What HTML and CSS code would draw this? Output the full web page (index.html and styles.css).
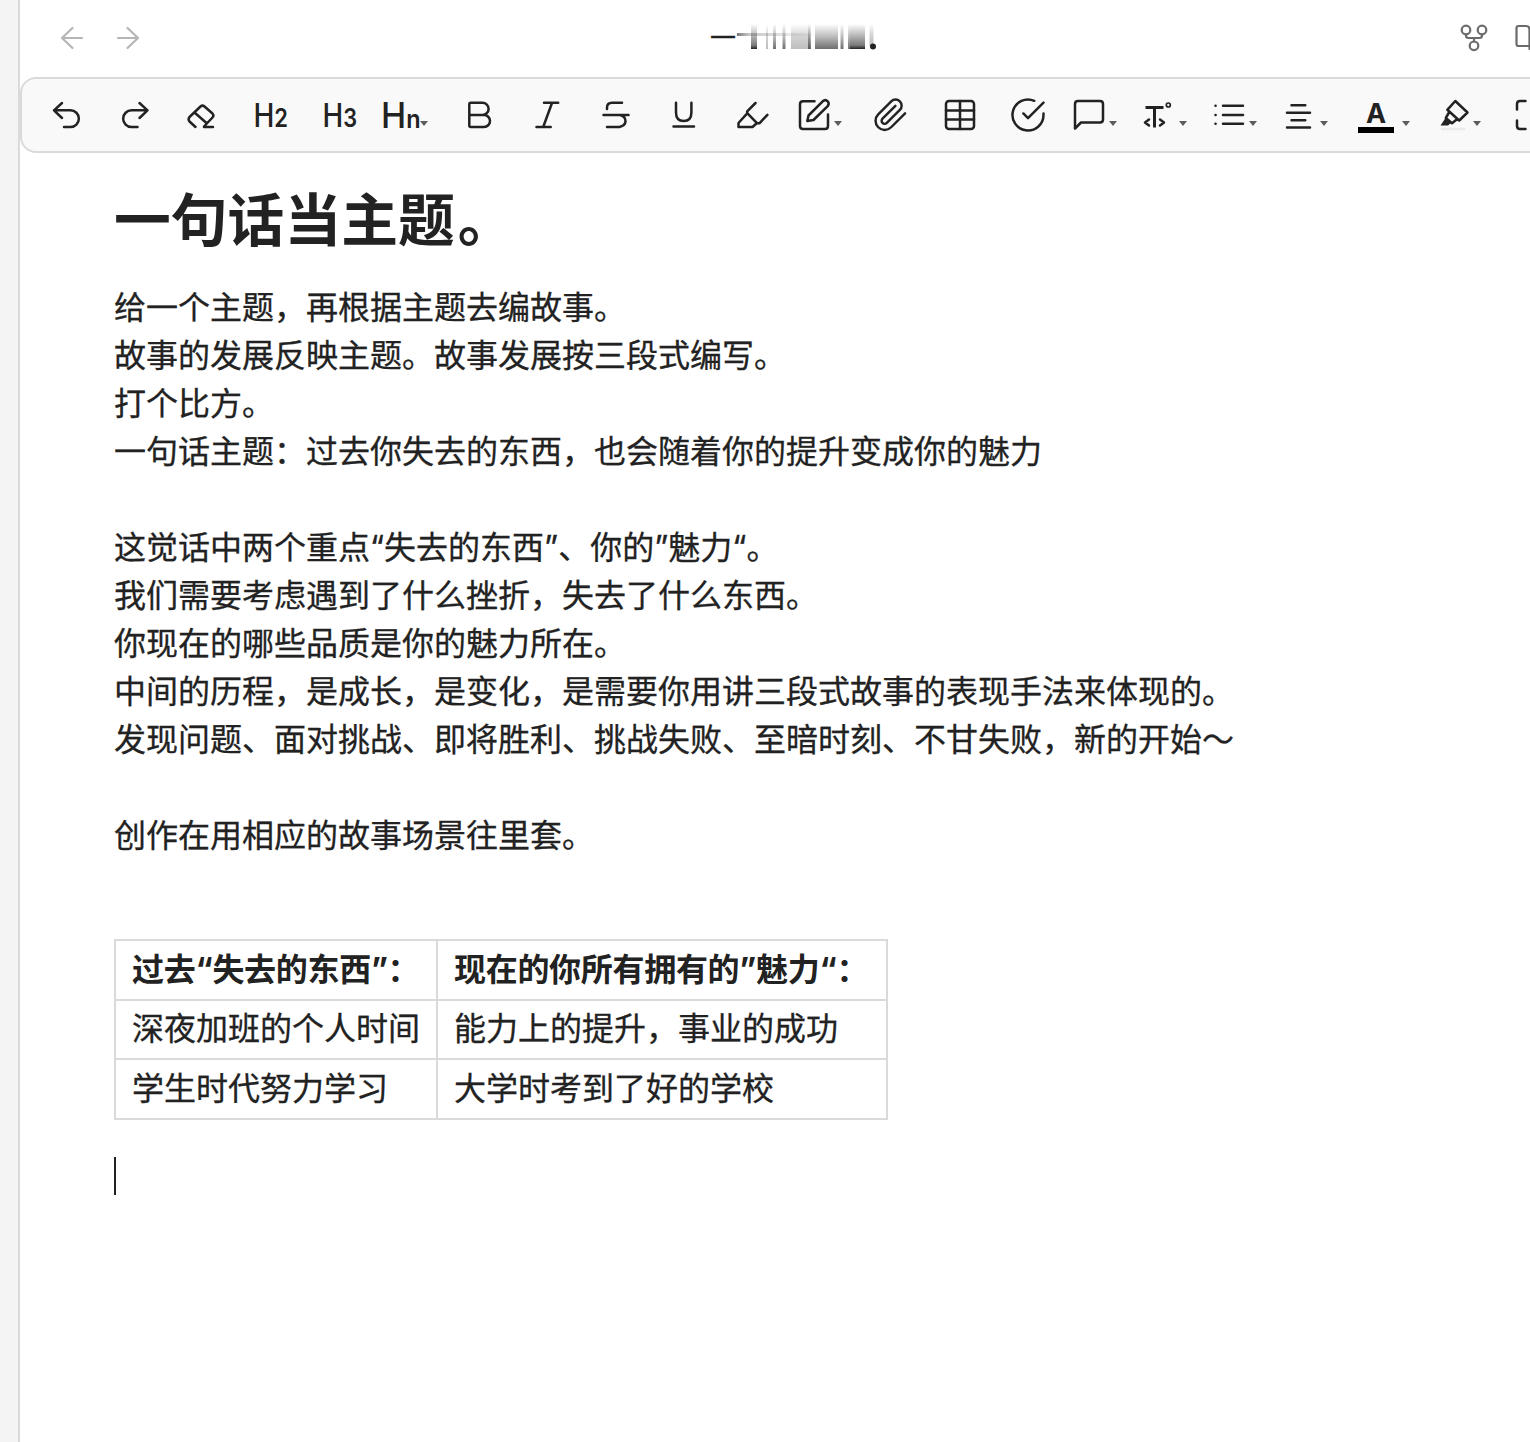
FILE: index.html
```html
<!DOCTYPE html>
<html lang="zh-CN">
<head>
    <meta charset="UTF-8">
    <meta name="viewport" content="width=device-width, initial-scale=1.0">
    <title>一句话当主题。</title>
    <link rel="stylesheet" href="styles.css">
</head>
<body>
    <div class="sidebar"></div>

    <div class="main">
        <header class="view-header">
            <div class="nav">
                <svg class="nav-icon" viewBox="0 0 40 40"><path d="M30 20H10M20.5 10 10 20l10.5 10"/></svg>
                <svg class="nav-icon" viewBox="0 0 40 40"><path d="M10 20h20M19.500 10 30 20 19.500 30"/></svg>
            </div>
            <div class="title">
                <span class="title-text">一</span>
                <svg class="title-smear" viewBox="0 0 142 30">
                    <defs>
                        <linearGradient id="dark" x1="0" y1="0" x2="0" y2="1">
                            <stop offset="0" stop-color="#222" stop-opacity="0"/>
                            <stop offset="0.85" stop-color="#222" stop-opacity="0.6"/>
                            <stop offset="1" stop-color="#222"/>
                        </linearGradient>
                        <linearGradient id="mid" x1="0" y1="0" x2="0" y2="1">
                            <stop offset="0" stop-color="#222" stop-opacity="0"/>
                            <stop offset="0.5" stop-color="#222" stop-opacity="0.3"/>
                            <stop offset="1" stop-color="#222" stop-opacity="0.65"/>
                        </linearGradient>
                        <linearGradient id="light" x1="0" y1="0" x2="0" y2="1">
                            <stop offset="0" stop-color="#222" stop-opacity="0"/>
                            <stop offset="0.5" stop-color="#222" stop-opacity="0.2"/>
                            <stop offset="1" stop-color="#222" stop-opacity="0.3"/>
                        </linearGradient>
                        <linearGradient id="fade">
                            <stop offset="0" stop-color="#222" stop-opacity="0.6"/>
                            <stop offset="0.15" stop-color="#222" stop-opacity="0.25"/>
                            <stop offset="1" stop-color="#222" stop-opacity="0"/>
                        </linearGradient>
                    </defs>
                    <rect x="1" y="11" width="80" height="3" fill="url(#fade)"/>
                    <rect x="15" y="2" width="6" height="25" fill="url(#dark)"/>
                    <rect x="30" y="2" width="2" height="25" fill="url(#light)"/>
                    <rect x="37" y="2" width="3" height="25" fill="url(#mid)"/>
                    <rect x="46.5" y="2" width="3" height="25" fill="url(#mid)"/>
                    <rect x="55" y="2" width="19" height="25" fill="url(#light)"/>
                    <rect x="72" y="2" width="3" height="25" fill="url(#mid)"/>
                    <rect x="79" y="2" width="23" height="25" fill="url(#mid)"/>
                    <rect x="104.5" y="2" width="3" height="25" fill="url(#mid)"/>
                    <rect x="112" y="2" width="2" height="25" fill="url(#mid)"/>
                    <rect x="114" y="2" width="15" height="25" fill="url(#dark)"/>
                    <rect x="133.5" y="2" width="4" height="22" fill="url(#light)"/>
                    <circle cx="137" cy="24.5" r="3" fill="#222"/>
                </svg>
            </div>
            <div class="actions">
                <svg class="action-icon" viewBox="0 0 40 40"><circle cx="12" cy="12" r="4.3"/><circle cx="28" cy="12" r="4.3"/><circle cx="20" cy="27.8" r="4.3"/><path d="M12 16.500v1q0 2.500 2.500 2.500h11q2.500 0 2.500-2.500v-1M20 20v3.500"/></svg>
                <svg class="action-icon" viewBox="0 0 40 40"><path d="M22 28H10.500q-2 0-2-2V10q0-2 2-2H18q3.500 0 3.500 3.500V31"/></svg>
            </div>
        </header>

        <div class="toolbar">
            <button class="tool"><svg viewBox="0 0 40 40"><path d="M16 8 8 15.300l8 7.700M8 15.300h16.500a8.300 8.300 0 0 1 0 16.700H18"/></svg></button>
            <button class="tool"><svg viewBox="0 0 40 40"><path d="m24.500 8 8 7.300-8 7.700M32.500 15.300H16.500a8.300 8.300 0 0 0 0 16.700h6"/></svg></button>
            <button class="tool"><svg viewBox="0 0 40 40"><path d="M12.500 32 6.500 26.500q-1.800-2.200 0-4.500L17.500 11.500q2-1.800 4 0l8 7q1.800 2 0 4L21 31.500M11.500 17.500l12 10.500M21 32h9"/></svg></button>
            <button class="tool"><svg viewBox="0 0 40 40"><text class="h-big" x="2.5" y="31.5" textLength="34.5" lengthAdjust="spacingAndGlyphs">H<tspan class="h-small">2</tspan></text></svg></button>
            <button class="tool"><svg viewBox="0 0 40 40"><text class="h-big" x="2.5" y="31.5" textLength="34.5" lengthAdjust="spacingAndGlyphs">H<tspan class="h-small">3</tspan></text></svg></button>
            <button class="tool tool-menu tool-heading"><svg viewBox="0 0 40 40"><text class="h-wide" x="-1" y="33" textLength="39.5" lengthAdjust="spacingAndGlyphs">H<tspan class="h-small">n</tspan></text></svg><i class="caret"></i></button>
            <button class="tool"><svg viewBox="0 0 40 40"><path d="M11.500 7.800h12a6.100 6.100 0 0 1 0 12.200H10.500M25 20a6 6 0 0 1 0 12H11.800q-1.500 0-1.500-1.500V9q0-1.200 1.200-1.200"/></svg></button>
            <button class="tool"><svg viewBox="0 0 40 40"><path d="M16 7.800h14.200M8.500 32h14.200M24 8l-8.800 24"/></svg></button>
            <button class="tool"><svg viewBox="0 0 40 40"><path d="M26 7.800H16q-5 0-5 5v1.200M7.500 20h25M24 20q5.500 1.500 5.500 6t-6 6H11"/></svg></button>
            <button class="tool"><svg viewBox="0 0 40 40"><path d="M12 7.800v9.700q0 8.500 7.700 8.500t7.700-8.500V7.800M9.500 31.600H30"/></svg></button>
            <button class="tool"><svg viewBox="0 0 40 40"><path d="m22.500 8-8.300 8.300v2L5.500 28v4h14l4.500-4M14.500 18.300l9.700 10h2.200l8-8.500"/></svg></button>
            <button class="tool tool-menu"><svg viewBox="0 0 40 40"><path d="M20.500 6.300H9q-3 0-3 3V31q0 3 3 3h22q3 0 3-3V19.500"/><path d="m13.300 26 1.200-5.500L28.700 6.300q2.700-2.300 5 0 2 2.300 0 4.800L19.500 25z"/></svg><i class="caret"></i></button>
            <button class="tool"><svg viewBox="0 0 40 40"><path transform="translate(1.5 1.5) scale(1.52)" class="scaled" d="m21.440 11.050-9.190 9.190a6 6 0 0 1-8.490-8.490l8.570-8.570A4 4 0 1 1 18 8.840l-8.590 8.570a2 2 0 0 1-2.830-2.830l8.490-8.480"/></svg></button>
            <button class="tool"><svg viewBox="0 0 40 40"><rect x="7" y="6" width="28" height="28" rx="3"/><path d="M21 6v28M7 15.500h28M7 24.500h28"/></svg></button>
            <button class="tool"><svg viewBox="0 0 40 40"><path transform="translate(1.4 1.4) scale(1.55)" class="scaled" d="M22 11.080V12a10 10 0 1 1-5.930-9.140M22 4 12 14.010l-3-3"/></svg></button>
            <button class="tool tool-menu"><svg viewBox="0 0 40 40"><path d="M6 33.500V9q0-3 3-3h22q3 0 3 3v15.500q0 3-3 3H12z"/></svg><i class="caret"></i></button>
            <button class="tool tool-menu tool-template"><svg viewBox="0 0 40 40"><path class="thick" d="M8.500 12.500h18M17.500 12.500v20"/><circle cx="31.3" cy="10" r="2" class="thin"/><path d="m12 24.500-4 3 4 3M23 24.500l4 3-4 3"/></svg><i class="caret"></i></button>
            <button class="tool tool-menu"><svg viewBox="0 0 40 40"><path d="M6.500 10.800h.1M6.500 20h.1M6.500 28.800h.1M14 10.800h20M14 20h20M14 28.800h20"/></svg><i class="caret"></i></button>
            <button class="tool tool-menu tool-align"><svg viewBox="0 0 40 40"><path d="M13.500 10.300h13.800M9 17.800h23M13.500 25.300h13.800M9 32.600h23"/></svg><i class="caret"></i></button>
            <button class="tool tool-menu tool-color"><svg viewBox="0 0 40 40"><text class="a-text" x="20" y="28">A</text><rect class="swatch" x="2" y="32" width="36" height="6"/></svg><i class="caret"></i></button>
            <button class="tool tool-menu tool-marker"><svg viewBox="0 0 40 40"><path class="marker-line" d="M7 34h22"/><path d="M20.300 6 32.500 17.500 24.200 25.500 12.300 14.800zM14 17.500l-3.200 5.500 6.200 5.300 5-4"/><path class="solid" d="M10.500 23 5.500 30.500h7.500l3.500-3z"/></svg><i class="caret"></i></button>
            <button class="tool"><svg viewBox="0 0 40 40"><path d="M7 14.500V9q0-3 3-3h5.500M7 25.500V31q0 3 3 3h5.500M25 6h6q3 0 3 3v6M25 34h6q3 0 3-3v-6"/></svg></button>
        </div>

        <article class="note">
            <h1>一句话当主题<span class="stop">。</span></h1>
            <p>给一个主题，再根据主题去编故事。<br>
            故事的发展反映主题。故事发展按三段式编写。<br>
            打个比方。<br>
            一句话主题：过去你失去的东西，也会随着你的提升变成你的魅力</p>
            <p>这觉话中两个重点“失去的东西”、你的”魅力“。<br>
            我们需要考虑遇到了什么挫折，失去了什么东西。<br>
            你现在的哪些品质是你的魅力所在。<br>
            中间的历程，是成长，是变化，是需要你用讲三段式故事的表现手法来体现的。<br>
            发现问题、面对挑战、即将胜利、挑战失败、至暗时刻、不甘失败，新的开始～</p>
            <p>创作在用相应的故事场景往里套。</p>
            <table>
                <thead>
                    <tr><th>过去“失去的东西”：</th><th>现在的你所有拥有的”魅力“：</th></tr>
                </thead>
                <tbody>
                    <tr><td>深夜加班的个人时间</td><td>能力上的提升，事业的成功</td></tr>
                    <tr><td>学生时代努力学习</td><td>大学时考到了好的学校</td></tr>
                </tbody>
            </table>
            <div class="cursor"></div>
        </article>
    </div>
</body>
</html>
```
FILE: styles.css
```css
* {
    box-sizing: border-box;
}
body {
    margin: 0;
    height: 1442px;
    display: flex;
    overflow: hidden;
    background: #fff;
    color: #222;
    font-family: Inter, 'Noto Sans CJK SC', sans-serif;
}
.sidebar {
    flex: none;
    width: 20px;
    background: #f4f4f4;
    border-right: 2px solid #dadada;
}
.main {
    flex: 1;
    min-width: 0;
    overflow: hidden;
}
svg {
    display: block;
    flex: none;
    width: 40px;
    height: 40px;
    fill: none;
    stroke: #222;
    stroke-width: 2.5;
    stroke-linecap: round;
    stroke-linejoin: round;
}

/* header */
.view-header {
    height: 77px;
    display: flex;
    justify-content: space-between;
    padding: 18px 0 0 32px;
}
.nav {
    display: flex;
    gap: 16px;
}
.nav-icon {
    stroke: #b5b5b5;
    stroke-width: 2.2;
}
.title {
    display: flex;
    margin-right: 14px;
}
.title-text {
    width: 26px;
    font-size: 26px;
    line-height: 39px;
    -webkit-text-stroke: 0.3px #222;
}
.title-smear {
    width: 142px;
    height: 30px;
    margin-top: 4px;
    stroke: none;
}
.actions {
    display: flex;
    gap: 14px;
    width: 76px;
}
.action-icon {
    stroke: #6b6b6b;
    stroke-width: 2.2;
}

/* toolbar */
.toolbar {
    display: flex;
    width: 1560px;
    height: 76px;
    padding-left: 10px;
    background: #f9f9f9;
    border: 2px solid #dadada;
    border-radius: 16px;
}
.tool {
    flex: none;
    display: flex;
    align-items: center;
    justify-content: center;
    width: 68.4px;
    height: 72px;
    margin: 0;
    padding: 0;
    border: 0;
    background: none;
}
.tool-menu {
    justify-content: flex-start;
    width: 70px;
    padding-left: 7px;
}
.tool-heading {
    width: 71px;
    padding-left: 8px;
}
.tool-heading .caret {
    margin-left: -2px;
}
.tool-template {
    padding-left: 5px;
}
.tool-template .caret {
    margin-left: 2px;
}
.tool-align {
    width: 72px;
    padding-left: 6px;
}
.tool-align .caret {
    margin-left: 2px;
}
.tool-color {
    width: 80px;
    padding-left: 12px;
}
.tool-color .caret {
    margin-left: 6px;
}
.tool-marker {
    width: 72px;
    padding-left: 11px;
}
.tool-marker .caret {
    margin-left: -2px;
}
.caret {
    margin-top: 17px;
    border: 4.5px solid transparent;
    border-top: 5px solid #5c5c5c;
    border-bottom: 0;
}
.toolbar text {
    fill: #222;
    stroke: none;
    font-family: Inter, sans-serif;
}
.toolbar .h-big {
    font-size: 32px;
    font-weight: 500;
}
.toolbar .h-small {
    font-size: 25px;
    font-weight: 600;
}
.toolbar .h-wide {
    font-size: 36px;
    font-weight: 500;
}
.toolbar .a-text {
    font-size: 27px;
    font-weight: 700;
    text-anchor: middle;
}
.scaled {
    stroke-width: 1.6;
}
.thick {
    stroke-width: 3;
    stroke-linecap: butt;
}
.thin {
    stroke-width: 1.7;
}
.swatch {
    fill: #000;
    stroke: none;
}
.solid {
    fill: #222;
    stroke: none;
}
.marker-line {
    stroke: #ebebeb;
}

/* note content */
.note {
    padding: 28px 0 0 94px;
    font-size: 32px;
    line-height: 48px;
    -webkit-text-stroke: 0.3px #222;
}
.note h1 {
    margin: 0 0 23px;
    font-size: 56.8px;
    line-height: 80px;
    font-weight: 700;
    -webkit-text-stroke: 0;
}
.stop {
    margin-left: 3px;
}
.note p {
    margin: 0 0 48px;
    white-space: nowrap;
}
.note table {
    margin-top: 79px;
    border-collapse: collapse;
    table-layout: fixed;
    width: 774px;
}
.note th,
.note td {
    height: 59.6px;
    padding: 0 16px;
    border: 2px solid #dadada;
    text-align: left;
    white-space: nowrap;
}
.note th:first-child {
    width: 322px;
}
.note th {
    font-weight: 700;
    letter-spacing: -0.3px;
    -webkit-text-stroke: 0;
}
.cursor {
    width: 2px;
    height: 38px;
    margin-top: 37px;
    background: #222;
}
```
